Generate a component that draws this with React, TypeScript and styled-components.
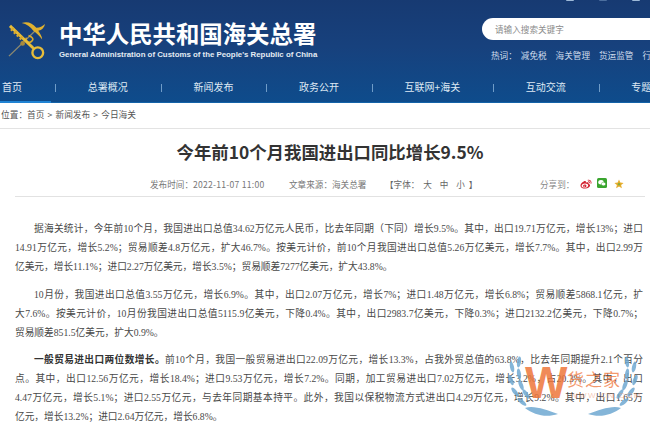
import styled, { createGlobalStyle } from "styled-components";
import { FaWeibo } from "react-icons/fa";

const GlobalStyle = createGlobalStyle`
  html, body {
    margin: 0;
    padding: 0;
    background: #fff;
    overflow: hidden;
  }
  #root {
    width: 650px;
    height: 430px;
    overflow: hidden;
    position: relative;
  }
`;

const sans = `"Noto Sans CJK SC", "Liberation Sans", sans-serif`;
const body = `"Liberation Serif", "Noto Sans CJK SC", serif`;

const navItems = ["总署概况", "新闻发布", "政务公开", "互联网+海关", "互动交流", "专题"];
const hotWords = ["减免税", "海关管理", "货运监管", "行"];

// leaves of one wreath branch: x, y, rotation
const leaves = [
  [13, 10, 8],
  [6, 15, -12],
  [13, 22, -8],
  [5, 28, -22],
  [15, 33, -22],
  [9, 40, -38],
  [20, 42, -34],
  [16, 50, -50],
];

const paragraphs: { lead?: string; lines: string[] }[] = [
  {
    lines: [
      "据海关统计，今年前10个月，我国进出口总值34.62万亿元人民币，比去年同期（下同）增长9.5%。其中，出口19.71万亿元，增长13%；进口",
      "14.91万亿元，增长5.2%；贸易顺差4.8万亿元，扩大46.7%。按美元计价，前10个月我国进出口总值5.26万亿美元，增长7.7%。其中，出口2.99万",
      "亿美元，增长11.1%；进口2.27万亿美元，增长3.5%；贸易顺差7277亿美元，扩大43.8%。",
    ],
  },
  {
    lines: [
      "10月份，我国进出口总值3.55万亿元，增长6.9%。其中，出口2.07万亿元，增长7%；进口1.48万亿元，增长6.8%；贸易顺差5868.1亿元，扩",
      "大7.6%。按美元计价，10月份我国进出口总值5115.9亿美元，下降0.4%。其中，出口2983.7亿美元，下降0.3%；进口2132.2亿美元，下降0.7%；",
      "贸易顺差851.5亿美元，扩大0.9%。",
    ],
  },
  {
    lead: "一般贸易进出口两位数增长。",
    lines: [
      "前10个月，我国一般贸易进出口22.09万亿元，增长13.3%，占我外贸总值的63.8%，比去年同期提升2.1个百分",
      "点。其中，出口12.56万亿元，增长18.4%；进口9.53万亿元，增长7.2%。同期，加工贸易进出口7.02万亿元，增长3.2%，占20.3%。其中，出口",
      "4.47万亿元，增长5.1%；进口2.55万亿元，与去年同期基本持平。此外，我国以保税物流方式进出口4.29万亿元，增长9.2%。其中，出口1.65万",
      "亿元，增长13.2%；进口2.64万亿元，增长6.8%。",
    ],
  },
];

const Logo = () => (
  <LogoSvg viewBox="0 0 42 42" aria-hidden="true">
    {/* staff with wings */}
    <path d="M1 37 L30 9" stroke="#8d8a70" strokeWidth="1.4" fill="none" />
    <path d="M14 3 C20 1 25 3 29 8 C33 8 35 6 38 4 C37 8 35 10 31 11 C33 14 35 17 35 20 C32 16 29 13 26 11 C23 7 19 4 14 3 Z" fill="#e0b12f" />
    <path d="M21 16 C25 17 27 20 24 22 C21 24 17 21 19 18" stroke="#d8a92c" strokeWidth="1.6" fill="none" />
    {/* key */}
    <path d="M2 6 L26 29" stroke="#e8bd3a" strokeWidth="3" fill="none" />
    <path d="M3 11 L6 8 M6 14 L9 11 M9 17 L12 14 M12 20 L15 17" stroke="#d9ab2d" strokeWidth="2.2" fill="none" />
    <circle cx="30.5" cy="33.5" r="5.5" stroke="#e8bd3a" strokeWidth="2.4" fill="none" />
    <circle cx="15" cy="24" r="2.4" fill="#a88a3c" />
  </LogoSvg>
);

const Branch = () => (
  <>
    {leaves.map(([x, y, r]) => (
      <ellipse key={`${x}-${y}`} cx={x} cy={y} rx="2" ry="5.5" transform={`rotate(${r} ${x} ${y})`} />
    ))}
    <path d="M19 56 C28 53 40 58 52 62 C40 66 28 63 19 56 Z" />
  </>
);

const Wreath = () => (
  <WreathSvg viewBox="0 0 135 70" aria-hidden="true">
    <g fill="#6fa9d2" opacity="0.85">
      <Branch />
      <g transform="translate(134 0) scale(-1 1)">
        <Branch />
      </g>
    </g>
  </WreathSvg>
);

const WechatIcon = () => (
  <ShareSvg viewBox="0 0 10 10" aria-hidden="true">
    <rect width="10" height="10" rx="1.5" fill="#3aa52f" />
    <ellipse cx="4" cy="4.3" rx="2.7" ry="2.2" fill="#fff" />
    <ellipse cx="6.5" cy="6" rx="2.2" ry="1.8" fill="#fff" stroke="#3aa52f" strokeWidth="0.4" />
  </ShareSvg>
);

const StarIcon = () => (
  <StarSvg viewBox="0 0 10 10" aria-hidden="true">
    <path d="M5 0.6 L6.3 3.6 L9.6 3.9 L7.1 6 L7.9 9.3 L5 7.6 L2.1 9.3 L2.9 6 L0.4 3.9 L3.7 3.6 Z" fill="#e7ad2c" />
    <circle cx="5" cy="5.2" r="1.2" fill="#8aa83a" />
  </StarSvg>
);

export default function App() {
  return (
    <>
      <GlobalStyle />
      <Page>
        <Header>
          <TopMarks>
            <TopMark />
            <TopMark $faint />
            <TopMark />
          </TopMarks>
          <Masthead>
            <Brand>
              <Logo />
              <BrandText>
                <BrandTitle>中华人民共和国海关总署</BrandTitle>
                <BrandSub>General Administration of Customs of the People's Republic of China</BrandSub>
              </BrandText>
            </Brand>
            <SearchArea>
              <SearchBox>请输入搜索关键字</SearchBox>
              <HotRow>
                <HotLabel>热词：</HotLabel>
                {hotWords.map((w) => (
                  <span key={w}>{w}</span>
                ))}
              </HotRow>
            </SearchArea>
          </Masthead>
          <Nav>
            <HomeItem>首页</HomeItem>
            {navItems.map((item) => (
              <NavItem key={item}>{item}</NavItem>
            ))}
          </Nav>
        </Header>

        <Breadcrumb>
          <span>位置：</span>
          <span>首页</span>
          <Sep>&gt;</Sep>
          <span>新闻发布</span>
          <Sep>&gt;</Sep>
          <span>今日海关</span>
        </Breadcrumb>

        <Article>
          <Title>今年前10个月我国进出口同比增长9.5%</Title>
          <Meta>
            <PublishTime>
              发布时间：<MetaDate>2022-11-07 11:00</MetaDate>
            </PublishTime>
            <Source>文章来源：海关总署</Source>
            <FontSize>【字体： 大 &nbsp;中 &nbsp;小 】</FontSize>
            <Share>
              分享到：
              <WeiboIcon />
              <WechatIcon />
              <StarIcon />
            </Share>
          </Meta>
          <Content>
            {paragraphs.map((p, i) => (
              <Paragraph key={i}>
                {p.lines.map((line, j) => (
                  <Line key={j} $first={j === 0} $last={j === p.lines.length - 1}>
                    {j === 0 && p.lead && <strong>{p.lead}</strong>}
                    {line}
                  </Line>
                ))}
              </Paragraph>
            ))}
          </Content>
        </Article>

        <Watermark>
          <Wreath />
          <WatermarkW>W</WatermarkW>
          <WatermarkName>货之家</WatermarkName>
          <WatermarkUrl>WWW.CN.COM</WatermarkUrl>
        </Watermark>
      </Page>
    </>
  );
}

const Page = styled.div`
  width: 650px;
  height: 430px;
  overflow: hidden;
  background: #fff;
  font-family: ${sans};
`;

const Header = styled.header`
  height: 103px;
  background: linear-gradient(180deg, #173a72 0%, #17417d 45%, #0e4c8c 100%);
  display: flex;
  flex-direction: column;
  position: relative;
`;

const TopMarks = styled.div`
  position: absolute;
  top: 0;
  left: 566px;
  display: flex;
  gap: 25px;
`;

const TopMark = styled.span<{ $faint?: boolean }>`
  width: 8px;
  height: 1px;
  border-radius: 0 0 3px 3px;
  background: ${(p) => (p.$faint ? "#4c6f9f" : "#9db9d8")};
`;

const Masthead = styled.div`
  height: 70px;
  display: flex;
  justify-content: space-between;
`;

const Brand = styled.div`
  display: flex;
  align-items: flex-start;
  padding: 20px 0 0 8px;
  gap: 10px;
`;

const LogoSvg = styled.svg`
  width: 41px;
  height: 41px;
  flex: none;
`;

const BrandText = styled.div`
  display: flex;
  flex-direction: column;
  margin-top: -1px;
`;

const BrandTitle = styled.div`
  font-size: 23.4px;
  line-height: 29px;
  font-weight: 700;
  color: #fff;
  white-space: nowrap;
`;

const BrandSub = styled.div`
  font-family: "Liberation Sans", sans-serif;
  font-size: 7.85px;
  line-height: 10px;
  margin-top: 2px;
  font-weight: 700;
  color: #e4ebf3;
  white-space: nowrap;
`;

const SearchArea = styled.div`
  width: 168px;
  padding-top: 18px;
  display: flex;
  flex-direction: column;
  flex: none;
`;

const SearchBox = styled.div`
  height: 22px;
  width: 190px;
  background: #fff;
  border-radius: 11px;
  padding-left: 13px;
  box-sizing: border-box;
  font-size: 8.6px;
  line-height: 22px;
  color: #8a8a8a;
`;

const HotRow = styled.div`
  display: flex;
  gap: 9px;
  margin: 9px 0 0 9px;
  font-size: 8.6px;
  line-height: 12px;
  color: #cfdcec;
  white-space: nowrap;
`;

const HotLabel = styled.span`
  margin-right: -5px;
`;

const Nav = styled.nav`
  height: 33px;
  box-sizing: border-box;
  display: flex;
  border-bottom: 1px solid #1463a8;
`;

const HomeItem = styled.div`
  width: 51px;
  height: 33px;
  margin-right: 4px;
  flex: none;
  box-sizing: border-box;
  padding: 1px 0 0 2px;
  font-size: 10px;
  line-height: 32px;
  color: #dfe9f4;
  border-bottom: 2px solid #2083d3;
`;

const NavItem = styled.div`
  flex: none;
  padding: 1px 32.8px 0;
  font-size: 10px;
  line-height: 32px;
  color: #dfe9f4;
  position: relative;
  white-space: nowrap;
  &::before {
    content: "";
    position: absolute;
    left: 0;
    top: 14px;
    width: 1px;
    height: 8px;
    background: #6f9cc8;
  }
`;

const Breadcrumb = styled.div`
  height: 25px;
  display: flex;
  gap: 3px;
  line-height: 24px;
  font-size: 8.7px;
  color: #555;
  border-bottom: 1px solid #e3e3e3;
  padding-left: 1px;
  white-space: nowrap;
  span:first-child {
    margin-right: -3px;
  }
`;

const Sep = styled.span`
  width: 5px;
  text-align: center;
`;

const Article = styled.main`
  padding: 0 5px 0 15px;
`;

const Title = styled.h1`
  margin: 0;
  padding-top: 10px;
  height: 33px;
  line-height: 26px;
  font-size: 17.4px;
  font-weight: 700;
  color: #333;
  text-align: center;
`;

const Meta = styled.div`
  height: 24px;
  display: flex;
  align-items: center;
  font-size: 8.6px;
  color: #777;
  border-bottom: 1px solid #e2e2e2;
  white-space: nowrap;
  padding-left: 135px;
`;

const PublishTime = styled.span`
  width: 139px;
  flex: none;
`;

const MetaDate = styled.span`
  letter-spacing: 0.25px;
`;

const Source = styled.span`
  width: 101px;
  flex: none;
  margin-right: -5px;
`;

const FontSize = styled.span`
  width: 155px;
  flex: none;
  color: #666;
  word-spacing: 2px;
`;

const Share = styled.span`
  display: flex;
  align-items: center;
  color: #888;
`;

const WeiboIcon = styled(FaWeibo)`
  width: 12px;
  height: 11px;
  margin-left: 6px;
  color: #d3202e;
`;

const ShareSvg = styled.svg`
  width: 10px;
  height: 10px;
  margin: -2px 0 0 5px;
`;

const StarSvg = styled.svg`
  width: 10px;
  height: 10px;
  margin: -1px 0 0 7px;
`;

const Content = styled.div`
  padding-top: 23px;
  display: flex;
  flex-direction: column;
  gap: 9px;
  margin-right: 2px;
`;

const Paragraph = styled.p`
  margin: 0;
  font-family: ${body};
  font-size: 9.7px;
  line-height: 18.9px;
  color: #484848;
`;

const Line = styled.span<{ $first: boolean; $last: boolean }>`
  display: block;
  white-space: nowrap;
  text-indent: ${(p) => (p.$first ? "19px" : "0")};
  text-align: justify;
  text-align-last: ${(p) => (p.$last ? "left" : "justify")};
  strong {
    font-weight: 700;
    color: #333;
  }
`;

const Watermark = styled.div`
  position: absolute;
  left: 506px;
  top: 352px;
  width: 135px;
  height: 72px;
  pointer-events: none;
`;

const WreathSvg = styled.svg`
  position: absolute;
  inset: 0;
  width: 135px;
  height: 70px;
`;

const WatermarkW = styled.div`
  position: absolute;
  left: 19px;
  top: 9px;
  font-family: "Liberation Sans", sans-serif;
  font-size: 45px;
  line-height: 44px;
  font-weight: 700;
  color: rgba(238, 118, 58, 0.85);
`;

const WatermarkName = styled.div`
  position: absolute;
  left: 61px;
  top: 16px;
  font-size: 17px;
  line-height: 22px;
  letter-spacing: 1px;
  color: rgba(240, 120, 60, 0.75);
  white-space: nowrap;
`;

const WatermarkUrl = styled.div`
  position: absolute;
  left: 64px;
  top: 39px;
  font-family: "Liberation Sans", sans-serif;
  font-size: 8px;
  line-height: 10px;
  letter-spacing: 1.5px;
  color: rgba(240, 150, 110, 0.5);
  white-space: nowrap;
`;
